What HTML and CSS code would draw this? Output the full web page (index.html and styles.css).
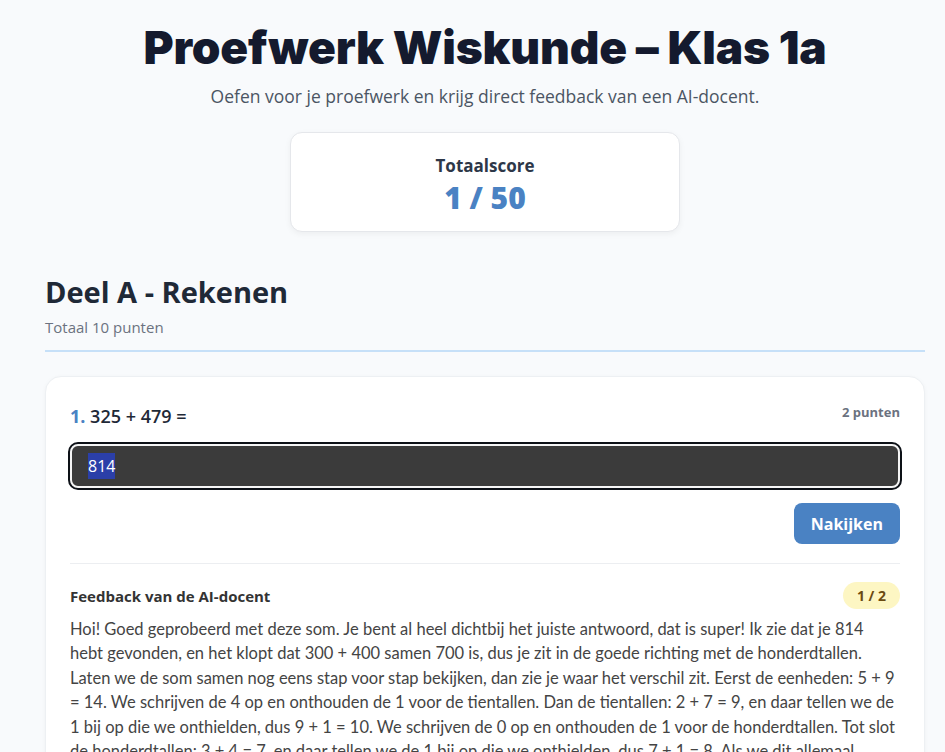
FILE: index.html
```html
<!DOCTYPE html>
<html lang="nl">
<head>
    <meta charset="UTF-8">
    <meta name="viewport" content="width=device-width, initial-scale=1.0">
    <title>Proefwerk Wiskunde – Klas 1a</title>
    <link rel="stylesheet" href="styles.css">
</head>
<body>
    <div class="page">
        <header class="page-header">
            <h1>Proefwerk Wiskunde – Klas 1a</h1>
            <p class="subtitle">Oefen voor je proefwerk en krijg direct feedback van een AI-docent.</p>
        </header>

        <div class="score-card">
            <div class="score-label">Totaalscore</div>
            <div class="score-value">1 / 50</div>
        </div>

        <section class="part">
            <h2>Deel A - Rekenen</h2>
            <p class="part-total">Totaal 10 punten</p>
            <hr class="part-line">

            <div class="question-card">
                <div class="question-head">
                    <div class="question-text"><span class="q-num">1.</span> 325 + 479 =</div>
                    <div class="q-points">2 punten</div>
                </div>

                <div class="answer-input"><span class="selected-text">814</span></div>

                <div class="actions">
                    <button type="button" class="check-btn">Nakijken</button>
                </div>

                <div class="feedback">
                    <div class="feedback-head">
                        <h3>Feedback van de AI-docent</h3>
                        <span class="badge">1 / 2</span>
                    </div>
                    <p class="feedback-text">Hoi! Goed geprobeerd met deze som. Je bent al heel dichtbij het juiste antwoord, dat is super! Ik zie dat je 814 hebt gevonden, en het klopt dat 300 + 400 samen 700 is, dus je zit in de goede richting met de honderdtallen. Laten we de som samen nog eens stap voor stap bekijken, dan zie je waar het verschil zit. Eerst de eenheden: 5 + 9 = 14. We schrijven de 4 op en onthouden de 1 voor de tientallen. Dan de tientallen: 2 + 7 = 9, en daar tellen we de 1 bij op die we onthielden, dus 9 + 1 = 10. We schrijven de 0 op en onthouden de 1 voor de honderdtallen. Tot slot de honderdtallen: 3 + 4 = 7, en daar tellen we de 1 bij op die we onthielden, dus 7 + 1 = 8. Als we dit allemaal samenvoegen krijgen we 804.</p>
                </div>
            </div>
        </section>
    </div>
</body>
</html>
```

FILE: styles.css
```css
body {
    margin: 0;
    background-color: #f8fafc;
    font-family: "Open Sans", "Noto Sans", sans-serif;
    color: #1f2937;
}
.page {
    width: 880px;
    margin-left: 45px;
    padding-top: 18px;
}
.page-header {
    text-align: center;
}
h1 {
    margin: 0;
    font-family: "Inter", sans-serif;
    font-weight: 900;
    font-size: 46px;
    line-height: 58px;
    color: #141a2e;
    letter-spacing: -0.2px;
}
.subtitle {
    margin: 8px 0 0;
    font-size: 17.5px;
    color: #4b5563;
}
.score-card {
    width: 388px;
    margin: 24px auto 0;
    background: white;
    border: 1px solid #e5e7eb;
    border-radius: 12px;
    box-shadow: 0 2px 6px rgba(0, 0, 0, 0.05);
    text-align: center;
    padding: 20px 0 18px;
}
.score-label {
    font-size: 17px;
    font-weight: 700;
    line-height: 26px;
    color: #2d3748;
}
.score-value {
    margin-top: 4px;
    font-size: 30px;
    font-weight: 800;
    color: #4a82c3;
    line-height: 30px;
}
.part {
    margin-top: 40px;
}
h2 {
    margin: 0;
    font-size: 29px;
    font-weight: 700;
    color: #1f2937;
}
.part-total {
    margin: 6px 0 0;
    font-size: 15px;
    color: #6b7280;
}
.part-line {
    margin: 13px 0 24px;
    border: none;
    height: 2px;
    background: #c6e0f8;
}
.question-card {
    background: white;
    border: 1px solid #edf0f3;
    border-radius: 16px;
    box-shadow: 0 1px 4px rgba(0, 0, 0, 0.04);
    padding: 26px 24px 40px;
}
.question-head {
    display: flex;
    justify-content: space-between;
    align-items: flex-start;
}
.question-text {
    font-size: 18px;
    font-weight: 600;
    color: #1f2937;
    margin-top: 1px;
}
.q-num {
    color: #4a82c3;
    font-weight: 700;
}
.q-points {
    font-size: 13px;
    font-weight: 700;
    color: #6b7280;
}
.answer-input {
    margin-top: 16px;
    height: 40px;
    background: #3b3b3b;
    border: 2px solid #f5f5f5;
    outline: 2px solid #0d1117;
    border-radius: 8px;
    padding: 0 16px;
    display: flex;
    align-items: center;
    font-size: 16px;
    color: white;
}
.selected-text {
    background: #2b3fa8;
    padding: 2px 0;
}
.actions {
    display: flex;
    justify-content: flex-end;
    margin-top: 15px;
    padding-bottom: 19px;
    border-bottom: 1px solid #eceef1;
}
.check-btn {
    background: #4a82c3;
    color: white;
    border: none;
    border-radius: 8px;
    font-family: inherit;
    font-size: 16px;
    font-weight: 700;
    padding: 0 17px;
    height: 41px;
    cursor: pointer;
}
.feedback {
    padding-top: 18px;
}
.feedback-head {
    display: flex;
    justify-content: space-between;
    align-items: center;
}
h3 {
    margin: 0;
    font-size: 15px;
    font-weight: 700;
    color: #333;
}
.badge {
    background: #fdf6c3;
    color: #6b4a10;
    font-size: 14px;
    font-weight: 700;
    border-radius: 14px;
    padding: 4px 14px;
}
.feedback-text {
    margin: 8px 0 0;
    font-family: "Lato", "Open Sans", sans-serif;
    font-size: 16.5px;
    line-height: 24.4px;
    color: #444;
}
```
